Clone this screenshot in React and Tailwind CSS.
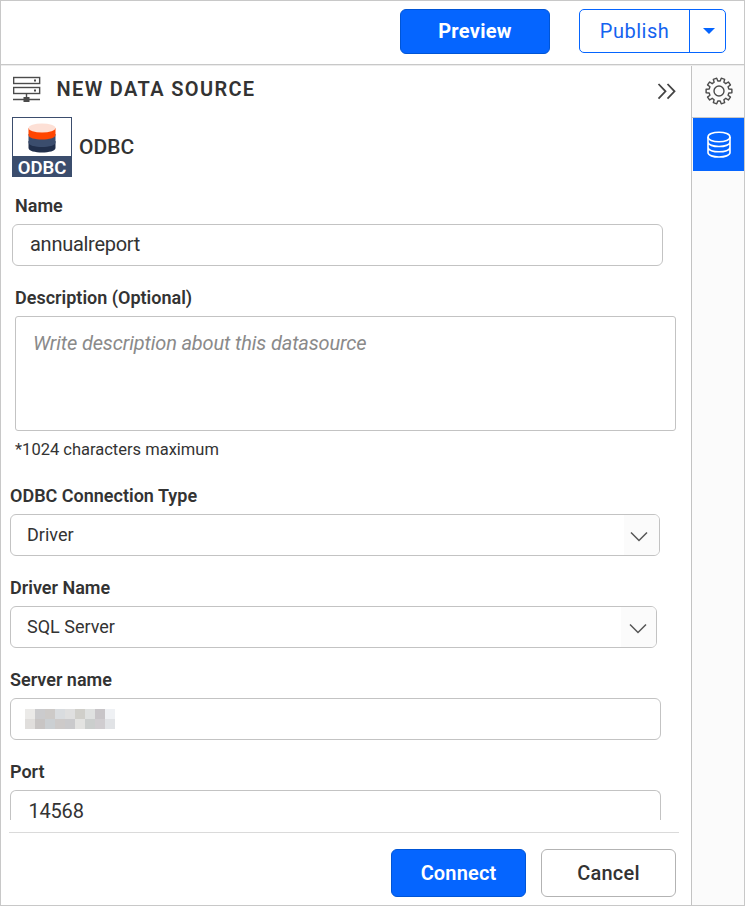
import React from "react";

const MOSAIC = [
  ["#ebeae8", "#cbcbcd", "#cdcac8", "#d9dcdf", "#dfdfdf", "#d0cfca", "#dfe1e0", "#c8c5c8", "#eff1f4"],
  ["#e0dedc", "#c8c5c4", "#cbcfd2", "#cdcac9", "#cacacc", "#e3e3e1", "#cbcecd", "#d0cdd0", "#e1e3e6"],
];

function gearPath(teeth, outer, inner) {
  const pts = [];
  const step = (Math.PI * 2) / teeth;
  for (let i = 0; i < teeth; i++) {
    const a = (i + 0.5) * step - Math.PI / 2;
    [[-0.31, inner], [-0.22, outer], [0.22, outer], [0.31, inner]].forEach(([f, r]) => {
      pts.push(`${(14 + r * Math.cos(a + f * step)).toFixed(2)} ${(14 + r * Math.sin(a + f * step)).toFixed(2)}`);
    });
  }
  return `M${pts.join("L")}Z`;
}

function ServerIcon() {
  return (
    <svg width="28" height="27" viewBox="0 0 28 27" fill="none" stroke="#4b4b4b" strokeWidth="1.4" className="ml-px">
      <rect x=".65" y="1.500" width="26" height="6" />
      <rect x=".65" y="11.500" width="26" height="6" />
      <path d="M13.500 17.500v4M0 23.500h27" />
      <path d="M10.500 21h6v5h-6z" fill="#4b4b4b" stroke="none" />
      <path d="M21 3.500h2v2h-2zM21 13.500h2v2h-2z" fill="#4b4b4b" stroke="none" />
    </svg>
  );
}

function OdbcLogo() {
  return (
    <div className="flex h-[60px] w-[60px] flex-col border border-[#3b4d6d] bg-white">
      <div className="flex h-[38px] justify-center pt-[5px]">
        <svg width="28" height="31" viewBox="0 0 28 31">
          <path d="M.5 18v7c0 6 27 6 27 0v-7z" fill="#212f4b" />
          <path d="M.5 11v8.500c0 6 27 6 27 0V11z" fill="#3b4d6d" />
          <path d="M.5 5v7c0 6 27 6 27 0V5z" fill="#ff4500" />
          <ellipse cx="14" cy="5" rx="13.500" ry="4.500" fill="#fde0d6" />
        </svg>
      </div>
      <div className="flex h-5 items-center justify-center bg-[#3b4d6d] pt-[3px] text-[18.5px] font-semibold leading-5 text-white">ODBC</div>
    </div>
  );
}

function Label({ children, className = "" }) {
  return <div className={`h-5 text-[18px] font-semibold leading-5 ${className}`}>{children}</div>;
}

function Select({ value, className, arrow }) {
  return (
    <div className={`flex h-[42px] overflow-hidden rounded-[6px] border border-[#c3c3c3] ${className}`}>
      <div className="flex-1 pl-4 text-[18px] leading-[39px]">{value}</div>
      <div className="flex w-[35px] items-center bg-[#fbfbfb]">
        <svg width="18" height="11" viewBox="0 0 18 11" fill="none" stroke="#555" strokeWidth="1.5" className={`shrink-0 ${arrow}`}>
          <path d="M1 1.500l8 8 8-8" />
        </svg>
      </div>
    </div>
  );
}

export default function App() {
  return (
    <div className="flex h-[906px] w-[745px] flex-col overflow-hidden border border-[#c8c8c8] bg-white font-['Roboto','Liberation_Sans',sans-serif] text-[#333]">
      <header className="flex h-16 shrink-0 justify-end border-b border-b-[#c8c8c8] pt-2 pr-[18px]">
        <button className="mr-[29px] h-[45px] w-[150px] rounded-[6px] border border-[#0055d6] bg-[#0565ff] pb-0.5 text-[20px] font-bold tracking-[0.3px] text-white">Preview</button>
        <div className="flex h-11 w-[147px] rounded-[5px] border border-[#0565ff] text-[#1463ef]">
          <button className="w-[109px] text-[20px] tracking-[0.5px]">Publish</button>
          <button className="flex flex-1 items-center justify-center border-l border-[#0565ff]">
            <svg width="12" height="6" viewBox="0 0 12 6" className="ml-[3px]"><path d="M0 0h12L6 6z" fill="#0565ff" /></svg>
          </button>
        </div>
      </header>
      <div className="flex min-h-0 flex-1 border-t border-[#ececec]">
        <main className="flex w-[690px] shrink-0 flex-col">
          <div className="flex h-[51px] shrink-0 pl-[11px] pt-[10px]">
            <ServerIcon />
            <h1 className="ml-[15.5px] h-7 flex-1 text-[20px] font-semibold leading-[26px] tracking-[1.35px]">NEW DATA SOURCE</h1>
            <svg width="19" height="17" viewBox="0 0 19 17" fill="none" stroke="#444" strokeWidth="1.8" className="mr-[15px] mt-[7px]">
              <path d="M1.500 1l7 7.300-7 7.300M10.500 1l7 7.300-7 7.300" />
            </svg>
          </div>
          <div className="flex h-[60px] shrink-0 items-center pl-[11px]">
            <OdbcLogo />
            <span className="ml-[7px] text-[21px] font-medium leading-6">ODBC</span>
          </div>
          <div className="h-[643px] shrink-0 pl-[9px] pt-[19px]">
            <Label className="ml-[5px]">Name</Label>
            <div className="ml-0.5 mt-2 h-[42px] w-[651px] rounded-[6px] border border-[#c3c3c3] pl-[17px] text-[20px] leading-[38px] tracking-[-0.27px]">annualreport</div>
            <Label className="ml-[5px] mt-[22px]">Description (Optional)</Label>
            <div className="ml-[5px] mt-2 h-[115px] w-[661px] rounded-[3px] border border-[#c3c3c3] pl-[17px] pt-[13px] text-[20px] italic leading-[26px] tracking-[-0.15px] text-[#8a8a8a]">Write description about this datasource</div>
            <div className="ml-[5px] mt-[9px] h-5 text-[16.5px] leading-5">*1024 characters maximum</div>
            <Label className="mt-[26px]">ODBC Connection Type</Label>
            <Select value="Driver" className="mt-2 w-[650px]" arrow="ml-[6px] mt-0.5" />
            <Label className="mt-[22px]">Driver Name</Label>
            <Select value="SQL Server" className="mt-2 w-[647px]" arrow="ml-[8px] mt-0.5" />
            <Label className="mt-[22px]">Server name</Label>
            <div className="mt-2 flex h-[42px] w-[651px] flex-col rounded-[6px] border border-[#c3c3c3] pl-[14px] pt-[10px]">
              {MOSAIC.map((row, i) => (
                <div key={i} className="flex">
                  {row.map((c, j) => <div key={j} className="h-[10px] w-[10px]" style={{ background: c }} />)}
                </div>
              ))}
            </div>
            <Label className="mt-[22px]">Port</Label>
            <div className="mt-2 h-[30px] w-[651px] rounded-t-[6px] border border-b-0 border-[#c3c3c3] pl-[17.5px] pt-[11px] text-[20px] leading-[18px] tracking-[-0.2px]">14568</div>
          </div>
          <footer className="ml-2 mt-[12px] flex h-[73px] w-[670px] shrink-0 justify-end border-t border-[#dadada] pr-[3px] pt-4">
            <button className="mr-[15px] h-12 w-[135px] rounded-[6px] border border-[#0055d6] bg-[#0565ff] text-[20px] font-semibold tracking-[0.15px] text-white">Connect</button>
            <button className="h-12 w-[135px] rounded-[6px] border border-[#b3b3b3] text-[20px] font-medium tracking-[0.2px]">Cancel</button>
          </footer>
        </main>
        <aside className="flex-1 border-l border-[#c3c3c3] bg-[#fbfbfb]">
          <div className="flex h-[52px] items-center justify-center border-b border-[#c8c8c8]">
            <svg width="28" height="28" viewBox="0 0 28 28" fill="none" stroke="#4b4b4b" strokeWidth="1.4" className="mb-px ml-0.5">
              <path d={gearPath(10, 13, 10)} strokeLinejoin="round" />
              <circle cx="14" cy="14" r="5" />
            </svg>
          </div>
          <div className="ml-px flex h-[53px] items-center justify-center bg-[#0565ff]">
            <svg width="24" height="28" viewBox="0 0 24 28" fill="none" stroke="#fff" strokeWidth="1.6">
              <ellipse cx="12" cy="6" rx="11" ry="4.800" />
              <path d="M1 6v15.500c0 6 22 6 22 0V6M1 11c0 6 22 6 22 0M1 16.300c0 6 22 6 22 0" />
            </svg>
          </div>
        </aside>
      </div>
    </div>
  );
}
